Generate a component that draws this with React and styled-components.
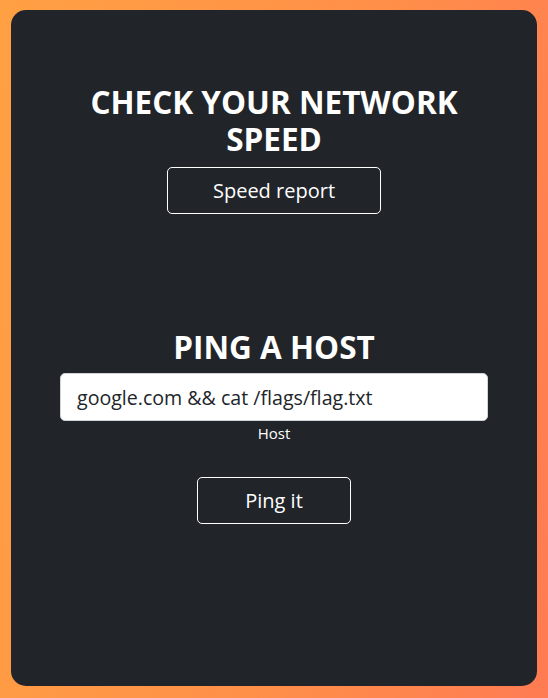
import React from "react";
import styled, { createGlobalStyle } from "styled-components";

const GlobalStyle = createGlobalStyle`
  html, body {
    margin: 0;
    padding: 0;
  }
  body {
    min-height: 100vh;
    background: linear-gradient(100deg, #ffa043 0%, #ff9048 55%, #ff7b53 100%);
    font-family: "Open Sans", "Noto Sans", sans-serif;
  }
`;

const Page = styled.div`
  padding: 10px 11px 12px 11px;
`;

const Card = styled.div`
  height: 676px;
  box-sizing: border-box;
  background: #212529;
  border-radius: 15px;
  padding: 73px 49px 0 49px;
  display: flex;
  flex-direction: column;
  align-items: center;
  color: #fff;
`;

const Section = styled.div`
  display: flex;
  flex-direction: column;
  align-items: center;
  width: 100%;
  margin-top: ${(p) => p.gap || 0}px;
`;

const Title = styled.h1`
  margin: 0;
  font-size: 31.5px;
  line-height: 37px;
  font-weight: 700;
  text-align: center;
  max-width: 390px;
`;

const Button = styled.button`
  margin-top: ${(p) => p.top || 0}px;
  width: ${(p) => p.width}px;
  height: 47px;
  box-sizing: border-box;
  background: transparent;
  border: 1px solid #fff;
  border-radius: 5px;
  color: #fff;
  font-family: inherit;
  font-size: 20px;
  cursor: pointer;
`;

const Input = styled.input`
  margin-top: 8px;
  width: 100%;
  height: 48px;
  box-sizing: border-box;
  padding: 0 16px;
  border: 1px solid #ced4da;
  border-radius: 5px;
  background: #fff;
  color: #212529;
  font-family: inherit;
  font-size: 19.6px;
  outline: none;
`;

const Label = styled.label`
  margin-top: 2px;
  font-size: 15px;
  line-height: 20px;
`;

export default function App() {
  return (
    <>
      <GlobalStyle />
      <Page>
        <Card>
          <Section>
            <Title>CHECK YOUR NETWORK SPEED</Title>
            <Button top={10} width={214}>Speed report</Button>
          </Section>
          <Section gap={114}>
            <Title>PING A HOST</Title>
            <Input id="host" defaultValue="google.com && cat /flags/flag.txt" />
            <Label htmlFor="host">Host</Label>
            <Button top={34} width={154}>Ping it</Button>
          </Section>
        </Card>
      </Page>
    </>
  );
}
